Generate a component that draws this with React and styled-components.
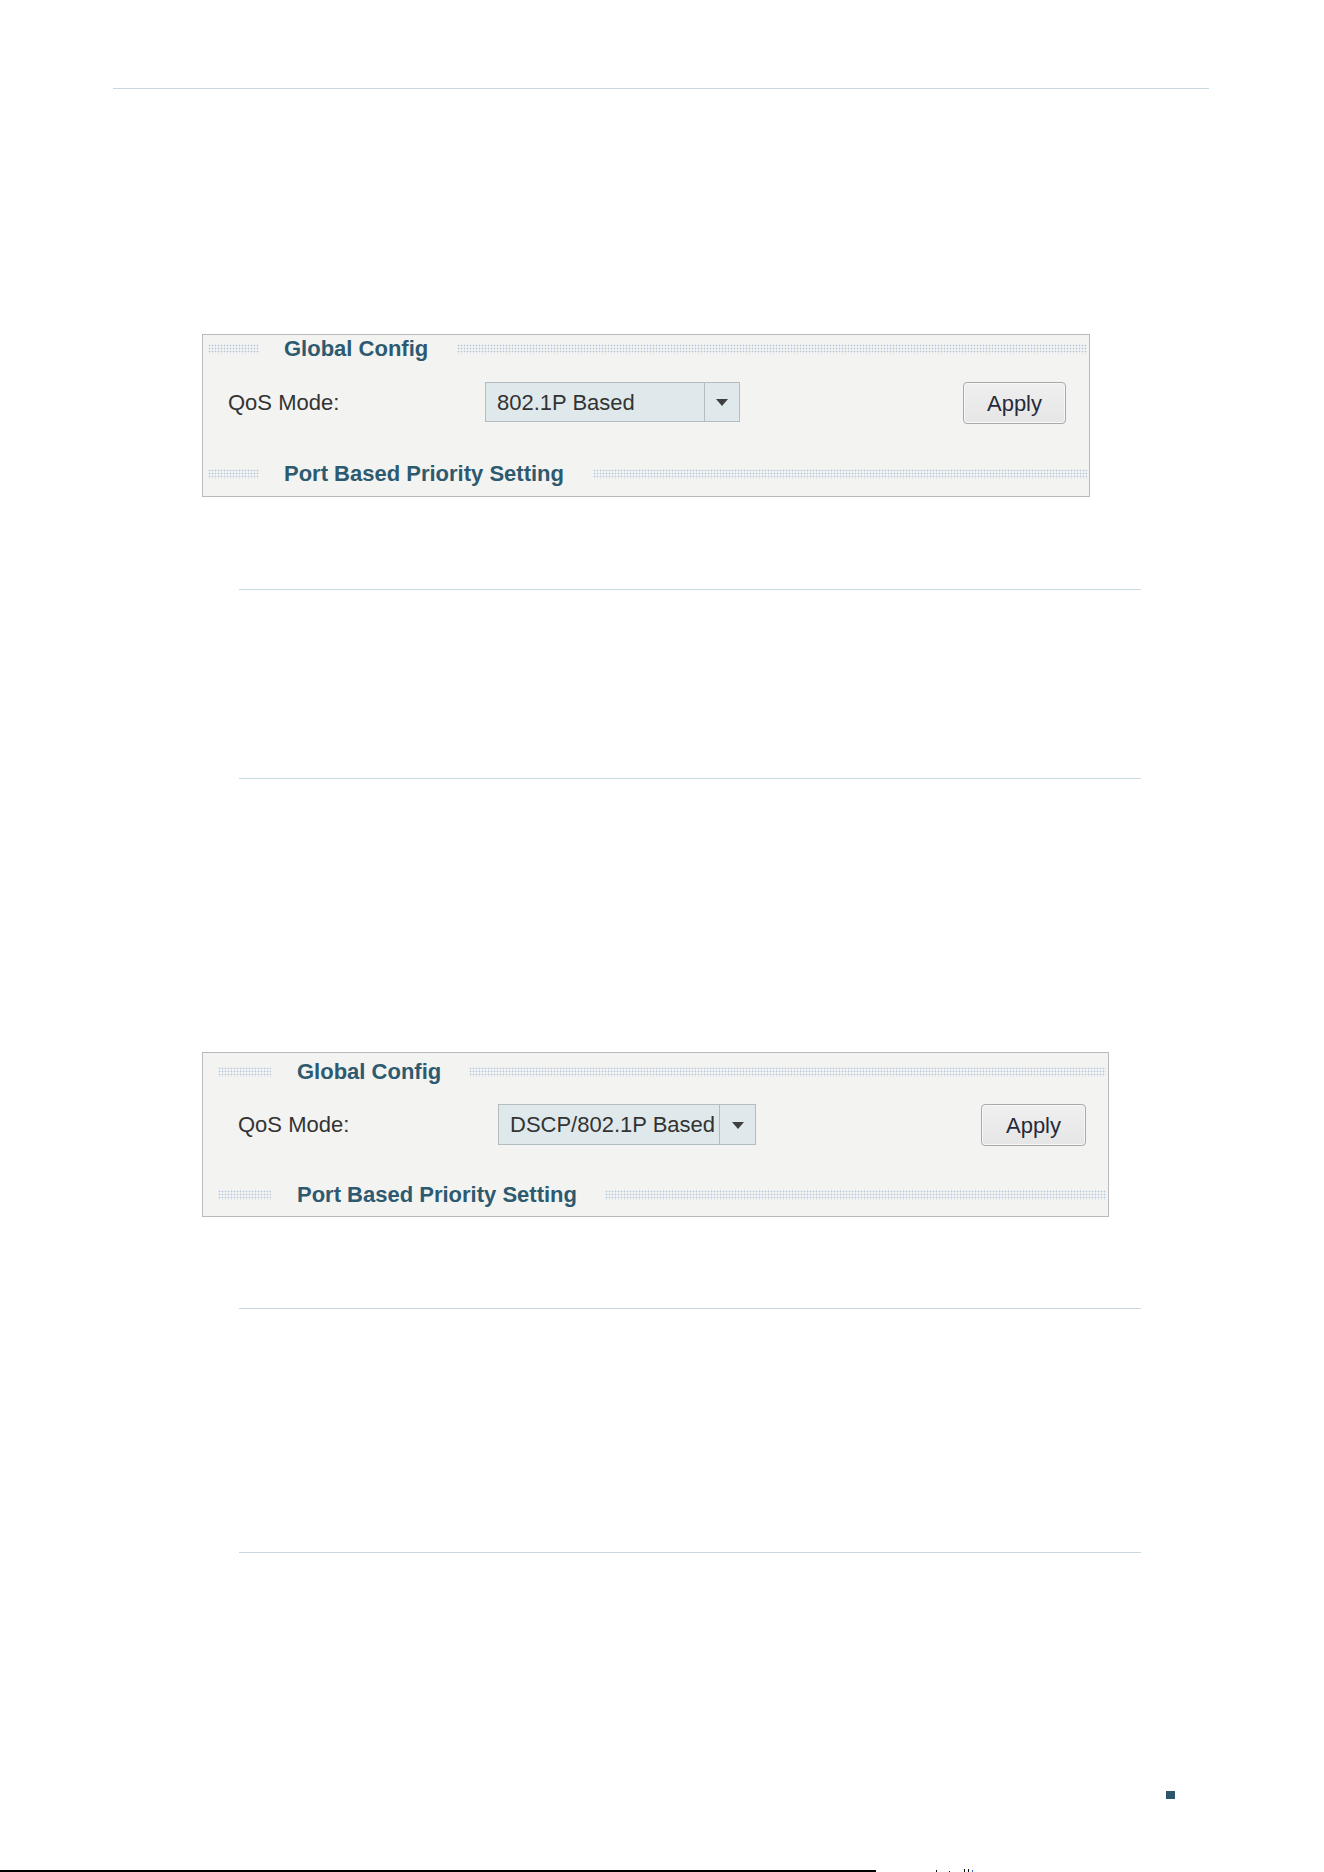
import React from "react";
import styled, { createGlobalStyle } from "styled-components";

const GlobalStyle = createGlobalStyle`
  html, body {
    margin: 0;
    padding: 0;
    background: #ffffff;
  }
  body {
    font-family: "Liberation Sans", Arial, sans-serif;
  }
`;

const panels = [
  {
    id: "p8021",
    mode: "802.1P Based",
    width: 888,
    top: 245,
    headTop: 1,
    leadLeft: 5,
    leadWidth: 51,
    titleGap: 25,
    tailGap: 29,
    formTop: 20,
    labelLeft: 25,
    labelWidth: 257,
    selectWidth: 255,
    selectHeight: 40,
    arrowWidth: 34,
    applyWidth: 103,
    applyRight: 23,
    head2Top: 37,
    bottom: 9,
  },
  {
    id: "pdscp",
    mode: "DSCP/802.1P Based",
    width: 907,
    top: 273,
    headTop: 6,
    leadLeft: 15,
    leadWidth: 53,
    titleGap: 26,
    tailGap: 28,
    formTop: 19,
    labelLeft: 35,
    labelWidth: 260,
    selectWidth: 258,
    selectHeight: 41,
    arrowWidth: 35,
    applyWidth: 105,
    applyRight: 22,
    head2Top: 36,
    bottom: 8,
  },
];

function App() {
  return (
    <Page>
      <GlobalStyle />
      <TopRule />

      <ConfigPanel cfg={panels[0]} />
      <NoteBox $top={92} $height={190} />

      <ConfigPanel cfg={panels[1]} />
      <NoteBox $top={91} $height={245} />

      <PageMark />
      <Footer>
        <BaseLine />
        <Crumbs>
          <Tick $h={2} />
          <Tick $h={1} $gap={12} />
          <Tick $h={3} $gap={14} />
          <Tick $h={3} $gap={3} />
          <Tick $h={2} $gap={3} $blue />
        </Crumbs>
      </Footer>
    </Page>
  );
}

function ConfigPanel({ cfg }) {
  return (
    <Panel $width={cfg.width} $top={cfg.top} $bottom={cfg.bottom}>
      <SectionHead $top={cfg.headTop}>
        <Dots $left={cfg.leadLeft} $width={cfg.leadWidth} />
        <Title $gap={cfg.titleGap} $tail={cfg.tailGap}>
          Global Config
        </Title>
        <Dots $fill />
      </SectionHead>

      <FormRow $top={cfg.formTop} $left={cfg.labelLeft} $right={cfg.applyRight}>
        <Label $width={cfg.labelWidth}>QoS Mode:</Label>
        <Select $width={cfg.selectWidth} $height={cfg.selectHeight}>
          <SelectValue>{cfg.mode}</SelectValue>
          <SelectArrow $width={cfg.arrowWidth}>
            <svg width="12" height="7" viewBox="0 0 12 7">
              <path d="M0 0 H12 L6 7 Z" fill="#3f3f3f" />
            </svg>
          </SelectArrow>
        </Select>
        <ApplyButton $width={cfg.applyWidth}>Apply</ApplyButton>
      </FormRow>

      <SectionHead $top={cfg.head2Top}>
        <Dots $left={cfg.leadLeft} $width={cfg.leadWidth} />
        <Title $gap={cfg.titleGap} $tail={cfg.tailGap}>
          Port Based Priority Setting
        </Title>
        <Dots $fill />
      </SectionHead>
    </Panel>
  );
}

const Page = styled.div`
  width: 1324px;
  height: 1872px;
  overflow: hidden;
  display: flex;
  flex-direction: column;
  background: #ffffff;
`;

const TopRule = styled.div`
  height: 1px;
  margin: 88px 0 0 113px;
  width: 1096px;
  background: #c6d8dd;
`;

const Panel = styled.section`
  box-sizing: border-box;
  width: ${(p) => p.$width}px;
  margin: ${(p) => p.$top}px 0 0 202px;
  padding-bottom: ${(p) => p.$bottom}px;
  border: 1px solid #b9b9b9;
  background: #f3f3f2;
  display: flex;
  flex-direction: column;
`;

const SectionHead = styled.div`
  display: flex;
  align-items: center;
  height: 26px;
  margin-top: ${(p) => p.$top}px;
  padding-right: 2px;
`;

/* dotted rule either side of a section title */
const Dots = styled.span`
  display: block;
  height: 10px;
  margin-left: ${(p) => p.$left || 0}px;
  width: ${(p) => (p.$fill ? "auto" : `${p.$width}px`)};
  flex: ${(p) => (p.$fill ? "1" : "none")};
  background-image: radial-gradient(circle, #b1c6d8 0.75px, transparent 1.1px);
  background-size: 3px 3px;
  background-position: 0 0;
`;

const Title = styled.span`
  margin: 0 ${(p) => p.$tail}px 0 ${(p) => p.$gap}px;
  font-size: 22px;
  line-height: 26px;
  font-weight: 700;
  color: #2d5a6f;
  white-space: nowrap;
`;

const FormRow = styled.div`
  display: flex;
  align-items: flex-start;
  margin-top: ${(p) => p.$top}px;
  padding: 0 ${(p) => p.$right}px 0 ${(p) => p.$left}px;
`;

const Label = styled.span`
  width: ${(p) => p.$width}px;
  font-size: 22px;
  line-height: 42px;
  color: #333333;
`;

const Select = styled.div`
  box-sizing: border-box;
  display: flex;
  width: ${(p) => p.$width}px;
  height: ${(p) => p.$height}px;
  border: 1px solid #b3bcbe;
  background: #dfe9eb;
`;

const SelectValue = styled.span`
  flex: 1;
  min-width: 0;
  overflow: hidden;
  white-space: nowrap;
  padding-left: 11px;
  font-size: 22px;
  line-height: 40px;
  color: #333333;
`;

const SelectArrow = styled.span`
  display: flex;
  align-items: center;
  justify-content: center;
  width: ${(p) => p.$width}px;
  border-left: 1px solid #b3bcbe;
  padding-top: 1px;
`;

const ApplyButton = styled.button`
  box-sizing: border-box;
  margin-left: auto;
  width: ${(p) => p.$width}px;
  height: 42px;
  padding: 2px 0 0;
  border: 1px solid #a9a9a9;
  border-radius: 4px;
  background: linear-gradient(#efefef, #e6e6e6);
  box-shadow: inset 0 0 0 1px #f7f7f7;
  font-family: "Liberation Sans", Arial, sans-serif;
  font-size: 22px;
  color: #262a3a;
  cursor: pointer;
`;

const NoteBox = styled.div`
  box-sizing: border-box;
  width: 902px;
  height: ${(p) => p.$height}px;
  margin: ${(p) => p.$top}px 0 0 239px;
  border-top: 1px solid #c6d8dd;
  border-bottom: 1px solid #c6d8dd;
`;

const PageMark = styled.span`
  display: block;
  width: 9px;
  height: 8px;
  margin: 238px 0 0 1166px;
  background: #2d566c;
`;

const Footer = styled.div`
  display: flex;
  align-items: flex-end;
  margin-top: auto;
  height: 4px;
`;

const BaseLine = styled.div`
  width: 876px;
  height: 2px;
  background: #000000;
`;

const Crumbs = styled.div`
  display: flex;
  align-items: flex-end;
  margin-left: 60px;
`;

const Tick = styled.span`
  display: block;
  width: 1px;
  height: ${(p) => p.$h}px;
  margin-left: ${(p) => p.$gap || 0}px;
  background: ${(p) => (p.$blue ? "#2a6fd0" : "#111111")};
`;

export default App;
